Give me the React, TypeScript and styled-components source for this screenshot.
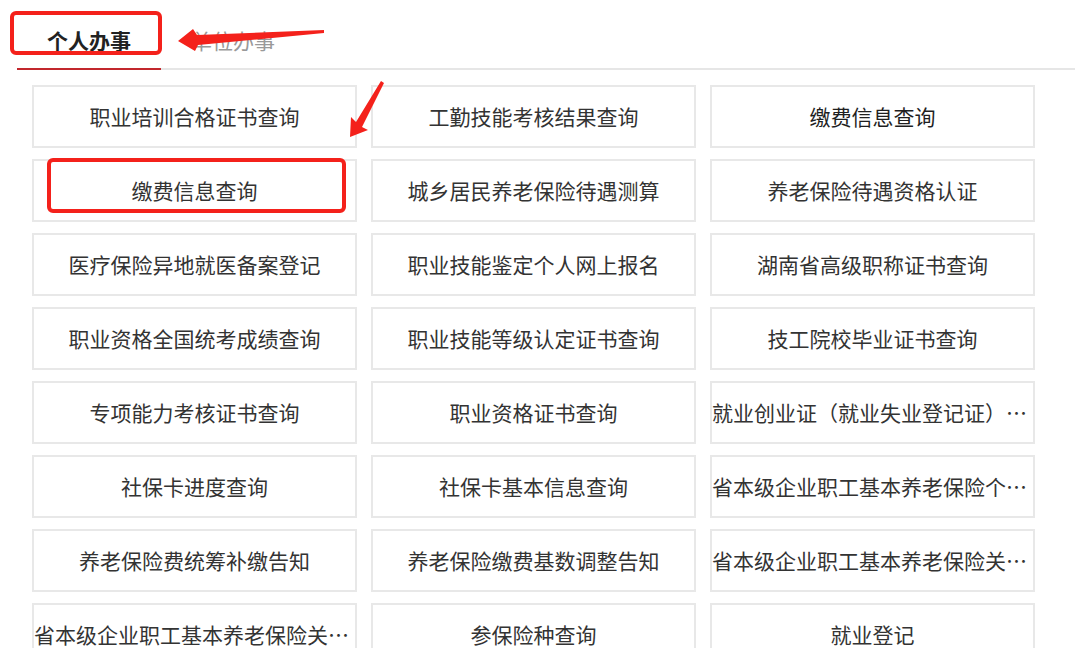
import React from 'react';
import styled, { createGlobalStyle } from 'styled-components';

const GlobalStyle = createGlobalStyle`
  html, body {
    margin: 0;
    padding: 0;
    background: #fff;
    overflow: hidden;
  }
  body {
    font-family: "Noto Sans CJK SC", "Microsoft YaHei", sans-serif;
  }
`;

const Page = styled.div`
  position: relative;
  width: 1075px;
  height: 648px;
  overflow: hidden;
`;

const TabBar = styled.div`
  display: flex;
  margin-left: 17px;
  height: 68px;
  border-bottom: 2px solid #e6e6e6;
`;

const Tab = styled.div<{ active?: boolean }>`
  box-sizing: border-box;
  height: 70px;
  margin-bottom: -2px;
  padding: 12px 30px 0;
  line-height: 56px;
  font-size: 21px;
  font-weight: ${({ active }) => (active ? 700 : 400)};
  color: ${({ active }) => (active ? '#222' : '#999')};
  border-bottom: 2px solid ${({ active }) => (active ? '#c2272d' : 'transparent')};
`;

const Grid = styled.div`
  display: grid;
  grid-template-columns: repeat(3, 325px);
  grid-auto-rows: 63px;
  column-gap: 14px;
  row-gap: 11px;
  margin-top: 15px;
  padding-left: 32px;
`;

const Cell = styled.div<{ strong?: boolean }>`
  box-sizing: border-box;
  border: 2px solid #e8e8e8;
  line-height: 59px;
  font-size: 21px;
  color: ${({ strong }) => (strong ? '#1f1f1f' : '#333')};
  text-align: center;
  white-space: nowrap;
  overflow: hidden;
  text-overflow: ellipsis;
`;

const Overlay = styled.svg`
  position: absolute;
  left: 0;
  top: 0;
  pointer-events: none;
`;

const services: string[] = [
  '职业培训合格证书查询',
  '工勤技能考核结果查询',
  '缴费信息查询',
  '缴费信息查询',
  '城乡居民养老保险待遇测算',
  '养老保险待遇资格认证',
  '医疗保险异地就医备案登记',
  '职业技能鉴定个人网上报名',
  '湖南省高级职称证书查询',
  '职业资格全国统考成绩查询',
  '职业技能等级认定证书查询',
  '技工院校毕业证书查询',
  '专项能力考核证书查询',
  '职业资格证书查询',
  '就业创业证（就业失业登记证）查询',
  '社保卡进度查询',
  '社保卡基本信息查询',
  '省本级企业职工基本养老保险个人权益记录',
  '养老保险费统筹补缴告知',
  '养老保险缴费基数调整告知',
  '省本级企业职工基本养老保险关系转移',
  '省本级企业职工基本养老保险关系转续',
  '参保险种查询',
  '就业登记',
];

const RED = '#f4211b';

// hand-drawn markup over the screenshot
const Annotations: React.FC = () => (
  <Overlay width={1075} height={648}>
    <rect x={12} y={13} width={148} height={40} rx={4} fill="none" stroke={RED} strokeWidth={4} />
    <rect x={49} y={160} width={295} height={51} rx={4} fill="none" stroke={RED} strokeWidth={4} />
    <polygon
      points="178,41 193,29 197,35 324,30 324,33 198,45 195,51"
      fill={RED}
    />
    <polygon
      points="350,137 351,117 356,122 381,81 384,83 362,127 368,130"
      fill={RED}
    />
  </Overlay>
);

export default function App() {
  return (
    <Page>
      <GlobalStyle />
      <TabBar>
        <Tab active>个人办事</Tab>
        <Tab>单位办事</Tab>
      </TabBar>
      <Grid>
        {services.map((name, i) => (
          <Cell key={i} strong={i === 2}>
            {name}
          </Cell>
        ))}
      </Grid>
      <Annotations />
    </Page>
  );
}
